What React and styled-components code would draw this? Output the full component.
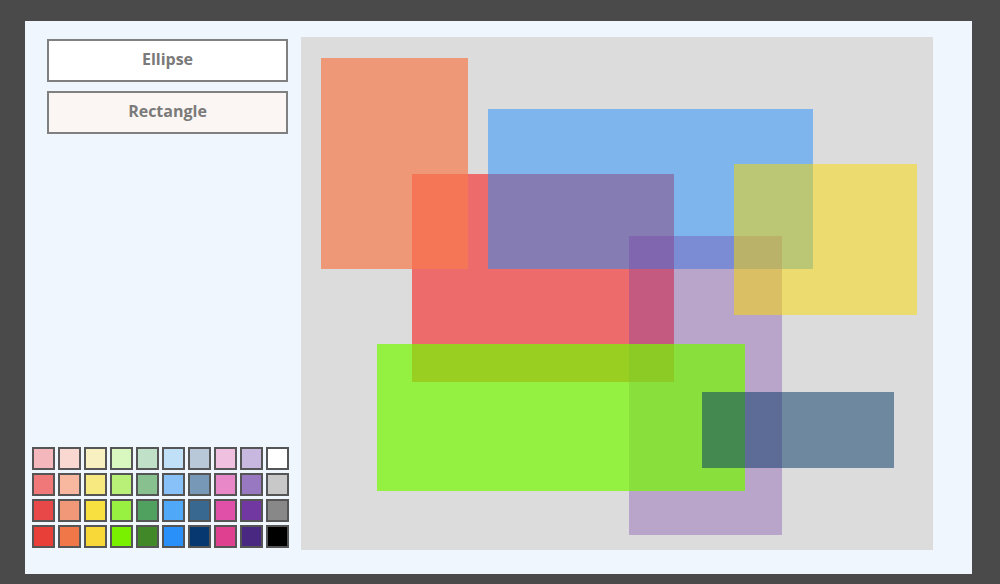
import React, { useState } from 'react'
import styled, { createGlobalStyle } from 'styled-components'

const GlobalStyle = createGlobalStyle`
	html, body {
		margin: 0;
		padding: 0;
		background: #4a4a4a;
		font-family: "Open Sans", "Liberation Sans", sans-serif;
	}
`

const palette = [
	['#f4b8bc', '#f8d8d0', '#f8f0c0', '#d8f8c0', '#c0e0c8', '#c0e0f8', '#b8c8d8', '#f0c0e0', '#c8b8e0', '#ffffff'],
	['#f07878', '#f8b8a0', '#f8e880', '#b8f078', '#88c090', '#88c0f8', '#7898b8', '#e888c8', '#9878c0', '#c8c8c8'],
	['#e84848', '#f09878', '#f8e040', '#98f040', '#50a060', '#50a8f8', '#386890', '#e050a8', '#7038a0', '#888888'],
	['#e84038', '#f07848', '#f8d838', '#78f000', '#408828', '#2890f8', '#083870', '#e04090', '#482880', '#000000'],
]

// shapes on the canvas, in drawing order
const shapes = [
	{ x: 111, y: 137, w: 262, h: 208, color: 'rgba(243, 59, 59, 0.7)' },
	{ x: 20, y: 21, w: 147, h: 211, color: 'rgba(247, 123, 77, 0.7)' },
	{ x: 187, y: 72, w: 325, h: 160, color: 'rgba(30, 142, 252, 0.5)' },
	{ x: 328, y: 199, w: 153, h: 299, color: 'rgba(120, 60, 170, 0.35)' },
	{ x: 433, y: 127, w: 183, h: 151, color: 'rgba(252, 218, 0, 0.5)' },
	{ x: 76, y: 307, w: 368, h: 147, color: 'rgba(117, 249, 0, 0.7)' },
	{ x: 401, y: 355, w: 192, h: 76, color: 'rgba(0, 52, 100, 0.5)' },
]

const App = () => {
	const [tool, setTool] = useState('rectangle')
	return (
		<>
			<GlobalStyle />
			<Page>
				<Panel>
					<Sidebar>
						<Tools>
							<ToolButton $active={tool === 'ellipse'} onClick={() => setTool('ellipse')}>
								Ellipse
							</ToolButton>
							<ToolButton $active={tool === 'rectangle'} onClick={() => setTool('rectangle')}>
								Rectangle
							</ToolButton>
						</Tools>
						<Palette>
							{palette.flat().map((c, i) => (
								<Swatch key={i} $color={c} />
							))}
						</Palette>
					</Sidebar>
					<Canvas>
						{shapes.map((s, i) => (
							<Shape
								key={i}
								$color={s.color}
								style={{ left: s.x, top: s.y, width: s.w, height: s.h }}
							/>
						))}
					</Canvas>
				</Panel>
			</Page>
		</>
	)
}

const Page = styled.div`
	width: 1000px;
	height: 584px;
	padding: 21px 28px 10px 25px;
	box-sizing: border-box;
`

const Panel = styled.div`
	display: flex;
	width: 947px;
	height: 553px;
	background: #eff6fd;
	padding: 16px 39px 24px 7px;
	box-sizing: border-box;
	gap: 11px;
`

const Sidebar = styled.div`
	display: flex;
	flex-direction: column;
	justify-content: space-between;
	width: 258px;
	padding-bottom: 2px;
`

const Tools = styled.div`
	display: flex;
	flex-direction: column;
	gap: 9px;
	padding: 2px 0 0 15px;
`

const ToolButton = styled.button`
	width: 241px;
	height: 43px;
	border: 2px solid #808080;
	background: ${(p) => (p.$active ? '#fbf6f3' : '#ffffff')};
	color: #7a7a7a;
	font-family: "Open Sans", "Liberation Sans", sans-serif;
	font-size: 16px;
	font-weight: 700;
	line-height: 1;
	cursor: pointer;
	padding: 0 0 4px;
`

const Palette = styled.div`
	display: grid;
	grid-template-columns: repeat(10, 23px);
	grid-auto-rows: 23px;
	gap: 3px;
`

const Swatch = styled.div`
	background: ${(p) => p.$color};
	border: 2px solid #555;
	box-sizing: border-box;
`

const Canvas = styled.div`
	position: relative;
	flex: 1;
	background: #dcdcdc;
	overflow: hidden;
`

const Shape = styled.div`
	position: absolute;
	background: ${(p) => p.$color};
`

export default App
